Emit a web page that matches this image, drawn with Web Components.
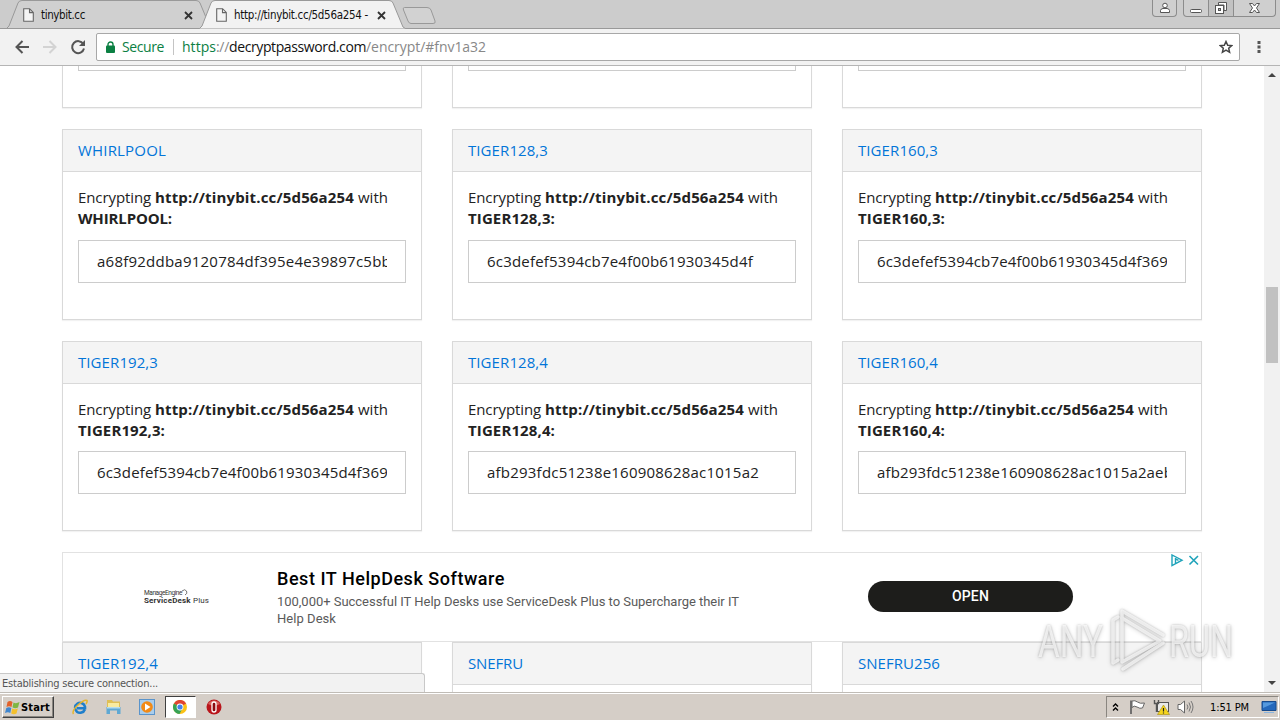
<!DOCTYPE html>
<html lang="en">
<head>
<meta charset="utf-8">
<title>http://tinybit.cc/5d56a254 - Encrypt</title>
<style>
html, body { margin: 0; height: 100%; overflow: hidden; background: #fff; }
</style>
</head>
<body>
<desktop-screen></desktop-screen>
<script>
class Base extends HTMLElement {
    constructor() {
        super();
        this.attachShadow({ mode: "open" });
    }
    connectedCallback() {
        this.shadowRoot.innerHTML = this.render();
    }
    attr(name, fallback = "") {
        return this.getAttribute(name) ?? fallback;
    }
}

// One line of text, tracked so that it runs to the given width.
class FitText extends Base {
    render() {
        return `<style>:host { display: inline-block; } span { white-space: pre; }</style><span><slot></slot></span>`;
    }
    connectedCallback() {
        super.connectedCallback();
        const span = this.shadowRoot.querySelector("span");
        const n = this.textContent.length;
        const natural = span.getBoundingClientRect().width;
        if (n > 0) {
            this.style.letterSpacing = ((Number(this.attr("w")) - natural) / n).toFixed(3) + "px";
        }
    }
}

class BrowserTab extends Base {
    render() {
        const on = this.hasAttribute("active");
        const fill = on ? "#f2f2f2" : "#d0d0d0";
        return `
<style>
:host { display: flex; align-items: center; position: relative; box-sizing: border-box; width: 207px; height: 29px; padding: 1px 20px 0 17px; font: 11.5px "DejaVu Sans Condensed", "DejaVu Sans", sans-serif; color: #111; }
:host([active]) { z-index: 1; margin-left: -14px; }
.shape { position: absolute; left: 0; top: 0; z-index: -1; }
.label { flex: 1; margin-left: 7px; }
svg { flex: none; }
</style>
<svg class="shape" width="207" height="29"><path d="M0.5 28.5 L3 26 L12 3 Q13 .5 16 .5 H190 Q193 .5 194 3 L204 27 L206.5 28.5" fill="${fill}" stroke="#999"/>${on ? "" : `<path d="M0 28.5H207" stroke="#999"/>`}</svg>
<svg width="11" height="14"><path d="M.7.7H6.6L10.3 4.4V13.3H.7ZM6.5.7V4.6H10.3" fill="#f4f4f4" stroke="#666" stroke-width="1.1"/></svg>
<div class="label"><slot></slot></div>
<svg width="9" height="9"><path d="M1 1L8 8M8 1L1 8" stroke="#333" stroke-width="1.8"/></svg>`;
    }
}

class TabStrip extends Base {
    render() {
        return `
<style>
:host { display: flex; justify-content: space-between; height: 29px; background: linear-gradient(#999, #999) 0 28px / 100% 1px no-repeat #ccc; }
.tabs { display: flex; isolation: isolate; padding-left: 6px; }
browser-tab { isolation: isolate; }
.new { margin: 6px 0 0 -5px; }
.caption { display: flex; padding-right: 4px; }
.group { display: flex; box-sizing: border-box; height: 17px; border: 1px solid #8c8c8c; border-top: 0; border-radius: 0 0 4px 4px; background: #cfcfcf; }
.group + .group { margin-left: 6px; }
.b { display: grid; place-items: center; width: 24px; }
.b + .b { border-left: 1px solid #8c8c8c; }
.wide { width: 41px; }
.max { background: #c2c2c2; }
</style>
<div class="tabs">
  <browser-tab><fit-text w="44">tinybit.cc</fit-text></browser-tab>
  <browser-tab active><fit-text w="134">http://tinybit.cc/5d56a254 -</fit-text></browser-tab>
  <svg class="new" width="36" height="20"><path d="M3.5 1.5H26Q29 1.5 30 4L34 15Q35 17.500 32 17.500H10Q8 17.500 7 15L2.500 4Q1.500 1.500 3.500 1.500Z" fill="#d2d2d2" stroke="#999"/></svg>
</div>
<div class="caption">
  <div class="group"><div class="b" style="width:23px"><svg width="12" height="12"><circle cx="6" cy="3.500" r="2.300" fill="#fff" stroke="#555"/><path d="M1.500 10.500V8.500Q2 6.500 4 6.500H8Q10 6.500 10.500 8.500V10.500Z" fill="#fff" stroke="#555"/></svg></div></div>
  <div class="group">
    <div class="b"><svg width="14" height="14"><rect x="1.500" y="8.500" width="11" height="3" rx="1" fill="#fff" stroke="#555"/></svg></div>
    <div class="b max"><svg width="14" height="14"><path d="M4.500 1.500H12.500V9.500H10V4H4.500Z" fill="#fff" stroke="#555"/><rect x="1.500" y="4.500" width="8" height="8" fill="#fff" stroke="#555"/><rect x="4.500" y="7.500" width="2" height="2" fill="#bbb" stroke="#555"/></svg></div>
    <div class="b wide"><svg width="13" height="12"><path d="M1.500 1.500H4.500L6.500 4L8.500 1.500H11.500L8.500 6L11.500 10.500H8.500L6.500 8L4.500 10.500H1.500L4.500 6Z" fill="#fff" stroke="#555"/></svg></div>
  </div>
</div>`;
    }
}

class ToolBar extends Base {
    render() {
        return `
<style>
:host { display: flex; align-items: center; box-sizing: border-box; height: 37px; padding: 0 0 1px 14px; background: #f2f2f2; border-bottom: 1px solid #b5b5b5; }
.nav { display: flex; gap: 12px; width: 82px; }
.box { display: flex; align-items: center; box-sizing: border-box; width: 1144px; height: 28px; padding: 0 6px 0 9px; border: 1px solid #a8a8a8; border-radius: 2px; background: #fff; font: 14px "Open Sans", sans-serif; color: #888; }
.secure { margin-left: 7px; color: #0b8043; }
.rule { width: 1px; height: 16px; margin: 0 8px 0 9px; background: #c4c4c4; }
.url { flex: 1; }
.host { color: #111; }
.menu { margin-left: 17px; }
</style>
<div class="nav">
  <svg width="16" height="16"><path d="M15 8H2.500M8.500 2L2.500 8L8.500 14" fill="none" stroke="#555" stroke-width="2"/></svg>
  <svg width="16" height="16"><path d="M1 8H13.500M7.500 2L13.500 8L7.500 14" fill="none" stroke="#d3d3d3" stroke-width="2"/></svg>
  <svg width="16" height="16"><path d="M13.300 5A6 6 0 1 0 14 9.500" fill="none" stroke="#555" stroke-width="2"/><path d="M15 1V7H9Z" fill="#555"/></svg>
</div>
<div class="box">
  <svg width="9" height="12"><path d="M2 6V3.500A2.500 2.500 0 0 1 7 3.500V6" fill="none" stroke="#0b8043" stroke-width="1.400"/><rect y="4.500" width="9" height="7.500" rx="1" fill="#0b8043"/></svg>
  <fit-text class="secure" w="42">Secure</fit-text>
  <div class="rule"></div>
  <div class="url"><fit-text class="secure" style="margin:0" w="34">https</fit-text><fit-text w="13">://</fit-text><fit-text class="host" w="137">decryptpassword.com</fit-text><fit-text w="120">/encrypt/#fnv1a32</fit-text></div>
  <svg width="14" height="14"><path d="M7 1.500L8.700 5.200L12.700 5.600L9.700 8.300L10.600 12.300L7 10.200L3.400 12.300L4.300 8.300L1.300 5.600L5.300 5.200Z" fill="none" stroke="#444" stroke-width="1.500"/></svg>
</div>
<svg class="menu" width="4" height="14"><path d="M.5 1H3.500V4H.5ZM.5 5.500H3.500V8.500H.5ZM.5 10H3.500V13H.5Z" fill="#555"/></svg>`;
    }
}

class HashCard extends Base {
    render() {
        const name = this.attr("name");
        const value = this.attr("value");
        return `
<style>
:host { display: flex; flex-direction: column; box-sizing: border-box; width: 360px; border: 1px solid #d9d9d9; box-shadow: 0 1px 1px rgba(0,0,0,.05); background: #fff; font: 15px/21px "Open Sans", sans-serif; color: #222; }
header { display: flex; align-items: center; box-sizing: border-box; flex: none; height: 42px; padding: 0 15px; border-bottom: 1px solid #d9d9d9; background: #f4f4f4; color: #0275d8; }
p { margin: 15px 15px var(--p-gap, 11px); }
b { display: flex; }
b, .url { font-weight: 700; }
.line { display: flex; }
.value { box-sizing: border-box; flex: none; height: 43px; margin: 0 15px; padding: 0 18px; border: 1px solid #ccc; line-height: 41px; }
.clip { display: flex; overflow: hidden; }
</style>
<header><fit-text w="${this.attr("tw")}">${name}</fit-text></header>
${value === "" ? "" : `<p>
  <span class="line"><fit-text w="77">Encrypting </fit-text><fit-text class="url" w="199">http://tinybit.cc/5d56a254</fit-text><fit-text w="34"> with</fit-text></span>
  <b><fit-text w="${this.attr("bw")}">${name}:</fit-text></b>
</p>
<div class="value"><div class="clip"><fit-text w="${this.attr("vw")}">${value}</fit-text></div></div>`}`;
    }
}

// Lower end of a card that is scrolled under the toolbar.
class CardTail extends Base {
    render() {
        return `
<style>
:host { display: block; box-sizing: border-box; width: 360px; height: 42px; padding: 0 15px; border: 1px solid #d9d9d9; border-top: 0; box-shadow: 0 1px 1px rgba(0,0,0,.05); }
div { box-sizing: border-box; height: 5px; border: 1px solid #ccc; border-top: 0; }
</style>
<div></div>`;
    }
}

class AdBanner extends Base {
    render() {
        return `
<style>
:host { display: flex; align-items: center; position: relative; box-sizing: border-box; width: 1140px; height: 90px; border: 1px solid #e2e2e2; font-family: Roboto, sans-serif; }
.logo { width: 133px; padding-left: 81px; color: #333; }
.logo div { display: flex; height: 8px; line-height: 8px; }
.m { font-size: 6.500px; }
.s { font-size: 8px; font-weight: 700; }
.p { font-weight: 400; }
.copy { width: 591px; padding-top: 1px; }
h3 { display: flex; margin: 0 0 3px; font: 500 18px/22px Roboto, sans-serif; color: #000; }
.d { display: block; font-size: 13px; line-height: 17px; color: #5a5a5a; }
.open { width: 205px; height: 31px; margin-top: -2px; border-radius: 16px; background: #1d1d1b; color: #fff; font: 500 14px/31px Roboto, sans-serif; text-align: center; }
.choices { position: absolute; right: 1px; top: 1px; }
</style>
<div class="logo">
  <div class="m"><fit-text w="38">ManageEngine</fit-text><svg width="6" height="7"><path d="M0 2Q3-.5 4.500 2T3 6" fill="none" stroke="#555" stroke-width=".8"/></svg></div>
  <div class="s"><fit-text w="49">ServiceDesk </fit-text><fit-text class="p" w="16">Plus</fit-text></div>
</div>
<div class="copy">
  <h3><fit-text w="228">Best IT HelpDesk Software</fit-text></h3>
  <fit-text class="d" w="462">100,000+ Successful IT Help Desks use ServiceDesk Plus to Supercharge their IT</fit-text>
  <fit-text class="d" w="59">Help Desk</fit-text>
</div>
<div class="open"><fit-text w="37">OPEN</fit-text></div>
<svg class="choices" width="29" height="13"><path d="M1 1V11.500L11 6.200ZM4.500 4V9.500M4.500 5L7.500 6.300" fill="none" stroke="#1fa3ba" stroke-width="1.400"/><path d="M18.500 2L27 10.500M27 2L18.500 10.500" stroke="#1fa3ba" stroke-width="1.600"/></svg>`;
    }
}

class ScrollBar extends Base {
    render() {
        return `
<style>
:host { display: flex; flex-direction: column; align-items: center; width: 16px; background: #f1f1f1; }
svg { flex: none; width: 8px; height: 17px; }
.up { flex: 0 0 204px; }
.thumb { width: 12px; height: 76px; background: #c1c1c1; }
.down { flex: 1; }
</style>
<svg><path d="M0 11L4 7L8 11Z" fill="#444"/></svg>
<div class="up"></div>
<div class="thumb"></div>
<div class="down"></div>
<svg><path d="M0 6L4 10L8 6Z" fill="#444"/></svg>`;
    }
}

const ROWS = [
    [
        ["WHIRLPOOL", 88, 94, "a68f92ddba9120784df395e4e39897c5bb", 294],
        ["TIGER128,3", 80, 87, "6c3defef5394cb7e4f00b61930345d4f", 266],
        ["TIGER160,3", 80, 87, "6c3defef5394cb7e4f00b61930345d4f369", 291],
    ], [
        ["TIGER192,3", 80, 87, "6c3defef5394cb7e4f00b61930345d4f369", 291],
        ["TIGER128,4", 80, 87, "afb293fdc51238e160908628ac1015a2", 272],
        ["TIGER160,4", 80, 87, "afb293fdc51238e160908628ac1015a2aeb", 296],
    ], [
        ["TIGER192,4", 80, 87, "", 0],
        ["SNEFRU", 55, 62, "", 0],
        ["SNEFRU256", 82, 89, "", 0],
    ],
];

class WebPage extends Base {
    render() {
        const row = (cards, cls) => `<div class="row ${cls}">` + cards.map(([name, tw, bw, value, vw]) =>
            `<hash-card name="${name}" tw="${tw}" bw="${bw}" value="${value}" vw="${vw}"></hash-card>`).join("") + `</div>`;
        return `
<style>
:host { display: flex; position: relative; height: 626px; overflow: hidden; background: #fff; }
main { flex: 1; padding-left: 62px; }
.row { display: flex; gap: 30px; margin-bottom: 21px; }
.r0 hash-card { height: 191px; }
.r1 hash-card { height: 190px; --p-gap: 10px; }
.r2 hash-card { height: 190px; }
.status { position: absolute; left: 0; bottom: 0; box-sizing: border-box; width: 425px; height: 19px; padding-left: 2px; border: solid #c8c8c8; border-width: 1px 1px 0 0; border-radius: 0 3px 0 0; background: #f2f2f2; font: 11px/19px "DejaVu Sans Condensed", sans-serif; color: #555; }
</style>
<main>
  <div class="row"><card-tail></card-tail><card-tail></card-tail><card-tail></card-tail></div>
  ${row(ROWS[0], "r0")}
  ${row(ROWS[1], "r1")}
  <ad-banner></ad-banner>
  ${row(ROWS[2], "r2")}
</main>
<scroll-bar></scroll-bar>
<div class="status"><fit-text w="156">Establishing secure connection...</fit-text></div>`;
    }
}

class TaskBar extends Base {
    render() {
        return `
<style>
:host { display: flex; align-items: center; box-sizing: border-box; height: 28px; padding: 1px 1px 0 2px; border-top: 1px solid #c0bcb6; box-shadow: inset 0 1px #fff; background: #d5cec7; font: 11px "DejaVu Sans Condensed", sans-serif; color: #000; }
.start { display: flex; align-items: center; gap: 1px; box-sizing: border-box; width: 52px; height: 22px; padding-left: 2px; border: 1px solid; border-color: #fff #404040 #404040 #fff; box-shadow: inset -1px -1px #8a8680; font-weight: 700; }
.apps { display: flex; flex: 1; align-items: center; padding-left: 9px; }
.app { display: grid; place-items: center; width: 33.500px; height: 22px; box-sizing: border-box; }
.on { width: 31px; margin: 0 2px 0 1px; background: #fff; border: 1px solid; border-color: #404040 #fff #fff #404040; }
.tray { display: flex; align-items: center; box-sizing: border-box; width: 173px; height: 22px; padding: 0 3px 0 5px; border: 1px solid; border-color: #8a8680 #fff #fff #8a8680; }
.clock { margin: 0 12px 0 16px; }
svg { flex: none; }
</style>
<div class="start">
  <svg width="15" height="15"><path d="M2.500 2Q5 0 7.500 2L6.500 7Q4 5.500 1.500 7Z" fill="#e2622b"/><path d="M8.500 2.500Q11 4 14.500 2L13 7.500Q10 9 7.500 7.300Z" fill="#7fb642"/><path d="M1.300 8Q4 6.500 6.300 8L5.300 13Q3 11.500 0 13Z" fill="#3f86cf"/><path d="M7.200 8.500Q10 10 12.800 8.500L11.500 13.500Q9 15 6.200 13.500Z" fill="#f4c02c"/></svg>
  <fit-text w="29">Start</fit-text>
</div>
<div class="apps">
  <div class="app"><svg width="16" height="16"><path d="M12.800 10.500A5 5 0 1 1 13 7.800V9.200H5" fill="none" stroke="#1f7fcb" stroke-width="2.600"/><path d="M1.500 15Q-.5 12 6 6T15 1.500Q15.500 3 14 5" fill="none" stroke="#e5b52c" stroke-width="1.500"/></svg></div>
  <div class="app"><svg width="17" height="16"><path d="M2 1H7L8 2.500H15V11H2Z" fill="#dfbf55"/><path d="M3 4H14V8H3Z" fill="#f8eba0"/><path d="M1.500 8H15.500V15H12V11.500H5V15H1.500Z" fill="#5fa8d3"/><path d="M2 8H15V9.500H2Z" fill="#b5dcee"/></svg></div>
  <div class="app"><svg width="16" height="16"><rect x=".5" y=".5" width="15" height="15" fill="#a9cdec" stroke="#5a94cb"/><circle cx="8" cy="8" r="5.800" fill="#f28a16"/><path d="M6 4.500L11.500 8L6 11.500Z" fill="#fff"/></svg></div>
  <div class="app on"><svg width="14" height="14"><circle cx="7" cy="7" r="7" fill="#fbc116"/><path d="M7 7L.9 3.500A7 7 0 0 1 13.100 3.500Z" fill="#df4433"/><path d="M7 7L.9 3.500A7 7 0 0 0 6.500 14L9.500 8.500Z" fill="#37a255"/><circle cx="7" cy="7" r="3.400" fill="#fff"/><circle cx="7" cy="7" r="2.600" fill="#4382ea"/></svg></div>
  <div class="app"><svg width="16" height="16"><circle cx="8" cy="8" r="7.500" fill="#b9151b"/><path d="M2 5A7 7 0 0 1 14 5Q8 8 2 5Z" fill="#d9625e"/><rect x="6" y="3" width="4" height="10" rx="2" fill="#8b0b10" stroke="#fff" stroke-width="1.300"/></svg></div>
</div>
<div class="tray">
  <svg width="8" height="10"><path d="M1 4.500L3.500 2L6 4.500M1 8.500L3.500 6L6 8.500" fill="none" stroke="#000" stroke-width="1.400"/></svg>
  <svg style="margin-left:9px" width="17" height="16"><path d="M2 15V1.500" stroke="#666" stroke-width="1.800"/><path d="M3 2Q6 1 8.500 3T15.500 4L13.500 9Q11 10 8 8T3 8.500Z" fill="#fff" stroke="#666"/></svg>
  <svg style="margin-left:7px" width="17" height="16"><rect x="4.500" y="3.500" width="11" height="9" fill="#e9e9e9" stroke="#555"/><path d="M1.500 1V4.500H5.500V1M3.500 4.500V13" fill="none" stroke="#555" stroke-width="1.400"/><path d="M10.500 6L16.500 15.500H4.500Z" fill="#f5d51d" stroke="#a68c0d" stroke-width=".6"/><path d="M10.500 9V12.500M10.500 13.500V14.500" stroke="#222" stroke-width="1.200"/></svg>
  <svg style="margin-left:7px" width="17" height="16"><path d="M1 5.500H3.500L7.500 2V14L3.500 10.500H1Z" fill="#fff" stroke="#666"/><path d="M10 5.500Q12 8 10 10.500M12 3.500Q15 8 12 12.500M14 2Q18 8 14 14" fill="none" stroke="#777" stroke-width="1"/></svg>
  <fit-text class="clock" w="39">1:51 PM</fit-text>
  <svg width="16" height="14"><path d="M1 1.500H15V10.500H1Z" fill="#2468bc" stroke="#174a8c"/><path d="M2 2.500H14L2 8Z" fill="#5599de"/><path d="M3 12.500H13" stroke="#8bb5df"/></svg>
</div>`;
    }
}

// Translucent mark laid over the lower right of the screen.
class WaterMark extends Base {
    render() {
        return `
<style>
:host { position: absolute; left: 1030px; top: 600px; width: 210px; height: 80px; filter: drop-shadow(0 0 1px rgba(0,0,0,.3)) drop-shadow(0 1px 2px rgba(0,0,0,.22)); }
text { font: 400 45px Roboto, sans-serif; fill: #fff; }
svg { opacity: .7; }
</style>
<svg width="210" height="80">
  <text x="8" y="57" textLength="65" lengthAdjust="spacingAndGlyphs">ANY</text>
  <text x="139" y="57" textLength="64" lengthAdjust="spacingAndGlyphs">RUN</text>
  <g fill="none" stroke="#fff" stroke-width="3.500" stroke-linejoin="round" stroke-linecap="round">
    <path d="M92 18V62L130 41Z"/><path d="M92 18V11L133 35"/><path d="M88 17L83 20V63L88 60"/><path d="M133 43L93 69"/>
  </g>
</svg>`;
    }
}

class DesktopScreen extends Base {
    render() {
        return `
<style>
:host { display: block; position: relative; width: 1280px; height: 720px; overflow: hidden; }
</style>
<tab-strip></tab-strip>
<tool-bar></tool-bar>
<web-page></web-page>
<task-bar></task-bar>
<water-mark></water-mark>`;
    }
}

customElements.define("fit-text", FitText);
customElements.define("browser-tab", BrowserTab);
customElements.define("tab-strip", TabStrip);
customElements.define("tool-bar", ToolBar);
customElements.define("hash-card", HashCard);
customElements.define("card-tail", CardTail);
customElements.define("ad-banner", AdBanner);
customElements.define("scroll-bar", ScrollBar);
customElements.define("web-page", WebPage);
customElements.define("task-bar", TaskBar);
customElements.define("water-mark", WaterMark);
customElements.define("desktop-screen", DesktopScreen);
</script>
</body>
</html>
